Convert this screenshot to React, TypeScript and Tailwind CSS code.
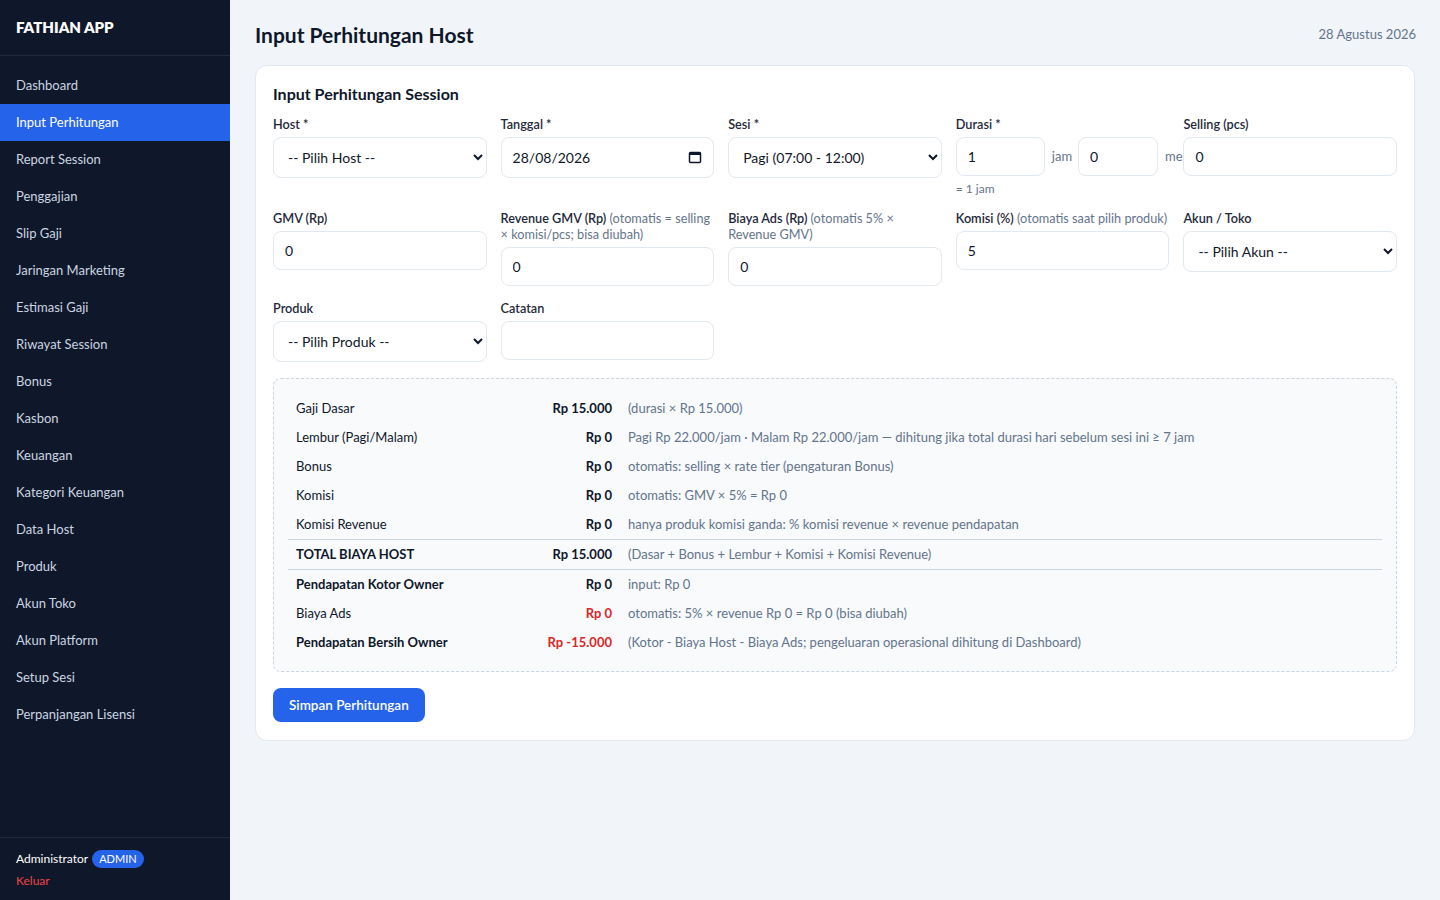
import React from "react";

const navItems = [
  "Dashboard",
  "Input Perhitungan",
  "Report Session",
  "Penggajian",
  "Slip Gaji",
  "Jaringan Marketing",
  "Estimasi Gaji",
  "Riwayat Session",
  "Bonus",
  "Kasbon",
  "Keuangan",
  "Kategori Keuangan",
  "Data Host",
  "Produk",
  "Akun Toko",
  "Akun Platform",
  "Setup Sesi",
  "Perpanjangan Lisensi",
];

const baseInput =
  "h-[39px] rounded-lg border border-[#e2e8f0] bg-white px-[11px] text-[14px] text-[#0f172a] outline-none";
const inputCls = `w-full ${baseInput}`;
const selectCls =
  "w-full h-[41px] rounded-lg border border-[#e2e8f0] bg-white pl-[10px] pr-[6px] text-[14px] text-[#0f172a] outline-none";

function Label({ children, hint }: { children: React.ReactNode; hint?: string }) {
  return (
    <div className="mb-[5px] text-[12.7px] leading-[16px] font-semibold text-[#1e293b]">
      {children}
      {hint && <span className="font-normal text-[#64748b]"> {hint}</span>}
    </div>
  );
}

function Row({
  label,
  amount,
  note,
  bold,
  red,
  border,
}: {
  label: string;
  amount: string;
  note: string;
  bold?: boolean;
  red?: boolean;
  border?: boolean;
}) {
  return (
    <div
      className={`grid grid-cols-[220px_112px_1fr] text-[13px] leading-[17px] ${
        border ? "border-t border-[#cbd5e1]" : ""
      }`}
    >
      <div className={`px-2 py-[6px] text-[#0f172a] ${bold ? "font-bold" : ""}`}>{label}</div>
      <div
        className={`px-2 py-[6px] text-right font-bold ${red ? "text-[#dc2626]" : "text-[#0f172a]"}`}
      >
        {amount}
      </div>
      <div className="px-2 py-[6px] text-[#64748b]">{note}</div>
    </div>
  );
}

export default function App() {
  return (
    <div
      className="flex min-h-[900px] w-full bg-[#f1f5f9]"
      style={{ fontFamily: "Lato, 'Noto Sans', sans-serif" }}
    >
      <aside className="flex w-[230px] shrink-0 flex-col bg-[#0f172a]">
        <div className="flex h-[56px] items-center border-b border-[#1e293b] px-4 pb-[1px] text-[15px] font-extrabold text-white">
          FATHIAN APP
        </div>
        <nav className="flex flex-col pt-[11px]">
          {navItems.map((item) => (
            <div
              key={item}
              className={`flex h-[37px] items-center px-4 text-[13px] ${
                item === "Input Perhitungan" ? "bg-[#2563eb] text-white" : "text-[#cbd5e1]"
              }`}
            >
              {item}
            </div>
          ))}
        </nav>
        <div className="mt-auto border-t border-[#1e293b] px-4 pt-[12px] pb-[10px]">
          <div className="flex items-center gap-1 text-[12px] text-white">
            Administrator
            <span className="rounded-full bg-[#2563eb] px-[7px] py-[1px] text-[11px] text-white">
              ADMIN
            </span>
          </div>
          <div className="mt-[4px] text-[12px] text-[#ef4444]">Keluar</div>
        </div>
      </aside>

      <main className="flex-1 px-[25px] pt-[21px] pb-6">
        <div className="flex h-[28px] items-center justify-between">
          <h1 className="text-[21px] font-bold text-[#0f172a]">Input Perhitungan Host</h1>
          <div className="mr-[-1px] text-[13px] text-[#64748b]">28 Agustus 2026</div>
        </div>

        <div className="mt-[16px] rounded-xl border border-[#e2e8f0] bg-white px-[17px] pt-[18px] pb-[18px]">
          <h2 className="text-[16px] leading-[20px] font-bold text-[#0f172a]">
            Input Perhitungan Session
          </h2>

          <div className="mt-[12px] grid grid-cols-5 items-start gap-x-[14px] gap-y-[14px]">
            {/* Row 1 */}
            <div>
              <Label>Host *</Label>
              <select className={selectCls} defaultValue="">
                <option value="">-- Pilih Host --</option>
              </select>
            </div>
            <div>
              <Label>Tanggal *</Label>
              <div className="relative">
                <input className={`${inputCls} h-[41px]`} defaultValue="28/08/2026" readOnly />
                <svg
                  className="absolute right-[12px] top-[13px]"
                  width="14"
                  height="14"
                  viewBox="0 0 14 14"
                  fill="none"
                >
                  <rect x="1.5" y="2.5" width="11" height="10" rx="1" stroke="#0f172a" strokeWidth="1.5" />
                  <rect x="1.5" y="2.5" width="11" height="2.5" fill="#0f172a" />
                </svg>
              </div>
            </div>
            <div>
              <Label>Sesi *</Label>
              <select className={selectCls} defaultValue="pagi">
                <option value="pagi">Pagi (07:00 - 12:00)</option>
              </select>
            </div>
            <div className="relative z-0">
              <Label>Durasi *</Label>
              <div className="flex w-[280px] items-center">
                <input className={`${baseInput} w-[89px] shrink-0`} defaultValue="1" />
                <span className="ml-[7px] text-[13px] text-[#64748b]">jam</span>
                <input className={`${baseInput} ml-[6px] w-[80px] shrink-0`} defaultValue="0" />
                <span className="ml-[7px] text-[13px] text-[#64748b]">menit</span>
              </div>
              <div className="mt-[6px] text-[12px] leading-[14px] text-[#64748b]">= 1 jam</div>
            </div>
            <div className="relative z-10 bg-white">
              <Label>Selling (pcs)</Label>
              <input className={inputCls} defaultValue="0" />
            </div>

            {/* Row 2 */}
            <div>
              <Label>GMV (Rp)</Label>
              <input className={inputCls} defaultValue="0" />
            </div>
            <div>
              <Label hint="(otomatis = selling × komisi/pcs; bisa diubah)">Revenue GMV (Rp)</Label>
              <input className={inputCls} defaultValue="0" />
            </div>
            <div>
              <Label hint="(otomatis 5% × Revenue GMV)">Biaya Ads (Rp)</Label>
              <input className={inputCls} defaultValue="0" />
            </div>
            <div>
              <Label hint="(otomatis saat pilih produk)">Komisi (%)</Label>
              <input className={inputCls} defaultValue="5" />
            </div>
            <div>
              <Label>Akun / Toko</Label>
              <select className={selectCls} defaultValue="">
                <option value="">-- Pilih Akun --</option>
              </select>
            </div>

            {/* Row 3 */}
            <div>
              <Label>Produk</Label>
              <select className={selectCls} defaultValue="">
                <option value="">-- Pilih Produk --</option>
              </select>
            </div>
            <div>
              <Label>Catatan</Label>
              <input className={inputCls} defaultValue="" />
            </div>
          </div>

          <div className="mt-[16px] rounded-lg border border-dashed border-[#cbd5e1] bg-[#f8fafc] px-[14px] pt-[15px] pb-[14px]">
            <Row label="Gaji Dasar" amount="Rp 15.000" note="(durasi × Rp 15.000)" />
            <Row
              label="Lembur (Pagi/Malam)"
              amount="Rp 0"
              note="Pagi Rp 22.000/jam · Malam Rp 22.000/jam — dihitung jika total durasi hari sebelum sesi ini ≥ 7 jam"
            />
            <Row label="Bonus" amount="Rp 0" note="otomatis: selling × rate tier (pengaturan Bonus)" />
            <Row label="Komisi" amount="Rp 0" note="otomatis: GMV × 5% = Rp 0" />
            <Row
              label="Komisi Revenue"
              amount="Rp 0"
              note="hanya produk komisi ganda: % komisi revenue × revenue pendapatan"
            />
            <Row
              label="TOTAL BIAYA HOST"
              amount="Rp 15.000"
              note="(Dasar + Bonus + Lembur + Komisi + Komisi Revenue)"
              bold
              border
            />
            <Row label="Pendapatan Kotor Owner" amount="Rp 0" note="input: Rp 0" bold border />
            <Row
              label="Biaya Ads"
              amount="Rp 0"
              note="otomatis: 5% × revenue Rp 0 = Rp 0 (bisa diubah)"
              red
            />
            <Row
              label="Pendapatan Bersih Owner"
              amount="Rp -15.000"
              note="(Kotor - Biaya Host - Biaya Ads; pengeluaran operasional dihitung di Dashboard)"
              bold
              red
            />
          </div>

          <button className="mt-[16px] h-[34px] rounded-lg bg-[#2563eb] px-4 text-[13.5px] font-semibold text-white">
            Simpan Perhitungan
          </button>
        </div>
      </main>
    </div>
  );
}
